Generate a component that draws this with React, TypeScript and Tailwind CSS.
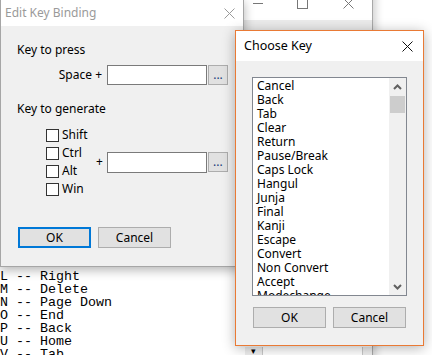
import React from "react";

const keys = [
  "Cancel",
  "Back",
  "Tab",
  "Clear",
  "Return",
  "Pause/Break",
  "Caps Lock",
  "Hangul",
  "Junja",
  "Final",
  "Kanji",
  "Escape",
  "Convert",
  "Non Convert",
  "Accept",
  "Modechange",
];

const lines = [
  "L -- Right",
  "M -- Delete",
  "N -- Page Down",
  "O -- End",
  "P -- Back",
  "U -- Home",
  "V -- Tab",
];

function CloseX({ color }: { color: string }) {
  return (
    <svg width="11" height="11" viewBox="0 0 11 11">
      <path d="M0.5 0.5 L10.5 10.5 M10.5 0.5 L0.5 10.5" stroke={color} strokeWidth="1" fill="none" />
    </svg>
  );
}

function Chevron({ up }: { up: boolean }) {
  return (
    <svg width="9" height="6" viewBox="0 0 9 6">
      <path
        d={up ? "M1 5 L4.5 1.5 L8 5" : "M1 1 L4.5 4.5 L8 1"}
        stroke="#606060"
        strokeWidth="2"
        fill="none"
      />
    </svg>
  );
}

function Checkbox({ label }: { label: string }) {
  return (
    <div className="flex h-[18px] items-center">
      <div className="h-[13px] w-[13px] border border-[#333333] bg-white" />
      <span className="ml-[3px] leading-[16px]">{label}</span>
    </div>
  );
}

export default function App() {
  return (
    <div className="relative h-[355px] w-[432px] overflow-hidden bg-white font-['Noto_Sans',sans-serif] text-[12px] text-black">
      {/* Background window */}
      <div className="absolute left-0 top-[-12px] h-[380px] w-[373px] border-r border-[#a8a8a8] bg-white shadow-[3px_0_8px_rgba(0,0,0,0.18)]">
        {/* title controls */}
        <div className="absolute left-[253px] top-[15px] h-[1px] w-[10px] bg-[#777777]" />
        <div className="absolute left-[297px] top-[10px] h-[11px] w-[11px] border border-[#777777]" />
        <div className="absolute left-[343px] top-[10px]">
          <CloseX color="#777777" />
        </div>
        {/* menu/toolbar band */}
        <div className="absolute left-0 top-[32px] h-[10px] w-full bg-[#ebebeb]" />
        {/* text content */}
        <div className="absolute left-0 top-[282px] font-['Liberation_Mono',monospace] text-[13.33px] leading-[13px] whitespace-pre text-black">
          {lines.map((l) => (
            <div key={l}>{l}</div>
          ))}
        </div>
        {/* bottom row */}
        <div className="absolute left-[245px] top-[359px] flex h-[12px] items-start">
          <div className="flex h-[12px] w-[17px] items-start justify-center bg-[#eeeeee] text-[9px] leading-[8px]">▾</div>
          <div className="h-[12px] w-[101px] border-l border-r border-[#c8c8c8] bg-white" />
          <div className="h-[12px] w-[9px] bg-[#eeeeee]" />
        </div>
      </div>

      {/* Edit Key Binding dialog */}
      <div className="absolute left-0 top-[-1px] flex h-[268px] w-[244px] flex-col border border-[#a6a6a6] bg-[#f0f0f0] shadow-[0_3px_10px_rgba(0,0,0,0.3)]">
        <div className="flex h-[26px] shrink-0 items-center justify-between bg-white">
          <span className="pl-[4px] leading-[16px] text-[#9a9a9a]">Edit Key Binding</span>
          <div className="mr-[8px] mt-[1px]">
            <CloseX color="#9a9a9a" />
          </div>
        </div>
        <div className="flex flex-col pl-[16px]">
          <div className="mt-[16px] leading-[16px]">Key to press</div>
          <div className="mt-[7px] flex items-center">
            <span className="w-[90px] pr-[5px] text-right leading-[16px]">Space +</span>
            <div className="h-[20px] w-[100px] border border-[#7a7a7a] bg-white" />
            <div className="ml-[1px] flex h-[20px] w-[20px] items-center justify-center border border-[#adadad] bg-[#e1e1e1] leading-[16px] text-[#1a3d7c]">
              ...
            </div>
          </div>
          <div className="mt-[16px] leading-[16px]">Key to generate</div>
          <div className="mt-[9px] flex items-center">
            <div className="ml-[29px] flex w-[50px] flex-col">
              <Checkbox label="Shift" />
              <Checkbox label="Ctrl" />
              <Checkbox label="Alt" />
              <Checkbox label="Win" />
            </div>
            <span className="leading-[16px]">+</span>
            <div className="ml-[4px] h-[21px] w-[100px] border border-[#7a7a7a] bg-white" />
            <div className="ml-[1px] flex h-[20px] w-[20px] items-center justify-center border border-[#adadad] bg-[#e1e1e1] leading-[16px] text-[#1a3d7c]">
              ...
            </div>
          </div>
          <div className="mt-[29px] flex">
            <div className="ml-[1px] flex h-[21px] w-[73px] items-center justify-center border-2 border-[#0078d7] bg-[#e1e1e1] leading-[16px]">
              OK
            </div>
            <div className="ml-[7px] flex h-[21px] w-[73px] items-center justify-center border border-[#adadad] bg-[#e1e1e1] leading-[16px]">
              Cancel
            </div>
          </div>
        </div>
      </div>

      {/* Choose Key dialog */}
      <div className="absolute left-[235px] top-[30px] flex h-[316px] w-[189px] flex-col border border-[#e97a35] bg-[#f0f0f0] shadow-[0_2px_12px_rgba(0,0,0,0.3)]">
        <div className="flex h-[30px] shrink-0 items-center justify-between bg-white">
          <span className="pl-[8px] text-[12.5px] leading-[16px]">Choose Key</span>
          <div className="mr-[10px]">
            <CloseX color="#111111" />
          </div>
        </div>
        <div className="flex flex-col pl-[16px]">
          <div className="mt-[16px] flex h-[219px] w-[155px] border border-[#828790] bg-white">
            <div className="flex-1 overflow-hidden pl-[4px] pt-[1px]">
              {keys.map((k) => (
                <div key={k} className="h-[14px] whitespace-nowrap leading-[14px]">
                  {k}
                </div>
              ))}
            </div>
            <div className="flex w-[17px] shrink-0 flex-col bg-[#f0f0f0]">
              <div className="flex h-[17px] items-center justify-center">
                <Chevron up />
              </div>
              <div className="mx-[1px] mt-[1px] h-[17px] bg-[#cdcdcd]" />
              <div className="flex-1" />
              <div className="flex h-[17px] items-center justify-center">
                <Chevron up={false} />
              </div>
            </div>
          </div>
          <div className="mt-[11px] flex">
            <div className="ml-[1px] flex h-[21px] w-[73px] items-center justify-center border border-[#adadad] bg-[#e1e1e1] leading-[16px]">
              OK
            </div>
            <div className="ml-[7px] flex h-[21px] w-[73px] items-center justify-center border border-[#adadad] bg-[#e1e1e1] leading-[16px]">
              Cancel
            </div>
          </div>
        </div>
      </div>
    </div>
  );
}
